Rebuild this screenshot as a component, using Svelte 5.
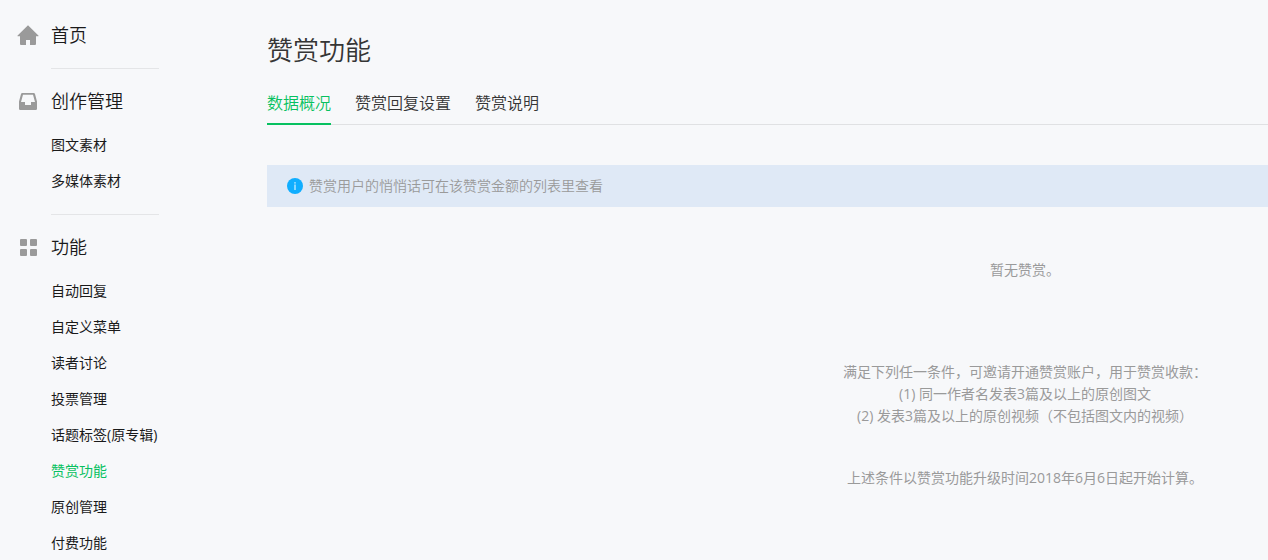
<script>
  const sections = [
    { title: '首页', icon: 'home', items: [] },
    { title: '创作管理', icon: 'inbox', items: ['图文素材', '多媒体素材'] },
    {
      title: '功能',
      icon: 'grid',
      items: ['自动回复', '自定义菜单', '读者讨论', '投票管理', '话题标签(原专辑)', '赞赏功能', '原创管理', '付费功能']
    }
  ];
  const tabs = ['数据概况', '赞赏回复设置', '赞赏说明'];
  let current = $state('赞赏功能');
  let tab = $state('数据概况');
</script>

<div class="page">
  <nav class="side" aria-label="主菜单">
    {#each sections as s}
      <section>
        <h2>
          <svg viewBox="0 0 24 24" width="24" height="24" aria-hidden="true">
            {#if s.icon === 'home'}
              <path d="M12 2.200 22.400 12.600a.4.4 0 0 1-.3.700H20v7.700a1 1 0 0 1-1 1h-5v-5h-4v5H5a1 1 0 0 1-1-1v-7.700H1.900a.4.4 0 0 1-.3-.700L12 2.200Z" />
            {:else if s.icon === 'inbox'}
              <path fill-rule="evenodd" d="M6.300 4h11.400a1.400 1.400 0 0 1 1.300 1L21 12.500v7.200a1.300 1.300 0 0 1-1.300 1.300H4.300A1.300 1.300 0 0 1 3 19.700V12.500l2-7.500a1.400 1.400 0 0 1 1.300-1ZM7 5.700 5 13H9v3h6v-3h4L17 5.700Z" />
            {:else}
              <rect x="4" y="4" width="7" height="7" rx="1" />
              <rect x="14" y="4" width="7" height="7" rx="1" />
              <rect x="4" y="14" width="7" height="7" rx="1" />
              <rect x="14" y="14" width="7" height="7" rx="1" />
            {/if}
          </svg>
          <a href="#top">{s.title}</a>
        </h2>
        {#if s.items.length}
          <ul>
            {#each s.items as item}
              <li>
                <a href="#top" class:active={item === current} onclick={() => (current = item)}>{item}</a>
              </li>
            {/each}
          </ul>
        {/if}
      </section>
    {/each}
  </nav>

  <main>
    <h1>赞赏功能</h1>
    <div class="tabs" role="tablist">
      {#each tabs as t}
        <button type="button" role="tab" aria-selected={t === tab} onclick={() => (tab = t)}>{t}</button>
      {/each}
    </div>
    <div class="notice">
      <svg viewBox="0 0 16 16" width="16" height="16" aria-hidden="true">
        <circle cx="8" cy="8" r="8" fill="#10aeff" />
        <path d="M7.500 6.500h1V12h-1zM7.400 4.200h1.200v1.200H7.400z" fill="#fff" />
      </svg>
      <span>赞赏用户的悄悄话可在该赞赏金额的列表里查看</span>
    </div>
    <div class="empty">
      <p>暂无赞赏。</p>
      <div class="rules">
        <p>满足下列任一条件，可邀请开通赞赏账户，用于赞赏收款：</p>
        <p>(1) 同一作者名发表3篇及以上的原创图文</p>
        <p>(2) 发表3篇及以上的原创视频（不包括图文内的视频）</p>
      </div>
      <p>上述条件以赞赏功能升级时间2018年6月6日起开始计算。</p>
    </div>
  </main>
</div>

<style>
  :global(body) {
    background: #f7f8fa;
  }
  .page {
    display: flex;
    min-height: 100vh;
    max-height: 100vh;
    overflow: hidden;
    color: #353535;
    font: 350 14px/22px "Open Sans", "Noto Sans CJK SC", sans-serif;
  }
  a {
    color: #1a1a1a;
    text-decoration: none;
  }
  h1, h2, p, ul {
    margin: 0;
    padding: 0;
    font-weight: inherit;
  }
  .side {
    flex: none;
    padding: 21px 0 0 16px;
    width: 267px;
    box-sizing: border-box;
  }
  section {
    padding-bottom: 19px;
  }
  section + section::before {
    content: "";
    display: block;
    width: 108px;
    height: 1px;
    margin: 0 0 18px 35px;
    background: #e4e5e7;
  }
  h2 {
    display: flex;
    align-items: center;
    gap: 11px;
    font-size: 18px;
    line-height: 28px;
  }
  h2 svg {
    fill: #9a9a9a;
  }
  ul {
    list-style: none;
    display: grid;
    gap: 8px;
    margin: 16px 0 0 35px;
  }
  li {
    line-height: 28px;
    font-weight: 400;
  }
  li .active {
    color: #07c160;
  }
  main {
    flex: 1 0 auto;
    min-width: 1516px;
    padding-top: 30px;
  }
  h1 {
    font-size: 26px;
    line-height: 40px;
  }
  .tabs {
    display: flex;
    gap: 24px;
    margin-top: 12px;
    box-shadow: inset 0 -1px #e0e1e3;
  }
  button {
    padding: 8px 0 7px;
    border: 0;
    border-bottom: 2px solid transparent;
    background: none;
    color: #353535;
    font: inherit;
    font-size: 16px;
    line-height: 26px;
    cursor: pointer;
  }
  button[aria-selected="true"] {
    color: #07c160;
    border-color: #07c160;
  }
  .notice {
    display: flex;
    align-items: center;
    gap: 6px;
    margin-top: 40px;
    padding: 10px 20px;
    background: #dfe9f6;
    color: #9a9a9a;
  }
  .empty {
    margin-top: 52px;
    text-align: center;
    font-weight: 400;
    color: #9a9a9a;
  }
  .rules {
    margin: 80px 0 40px;
  }
</style>
